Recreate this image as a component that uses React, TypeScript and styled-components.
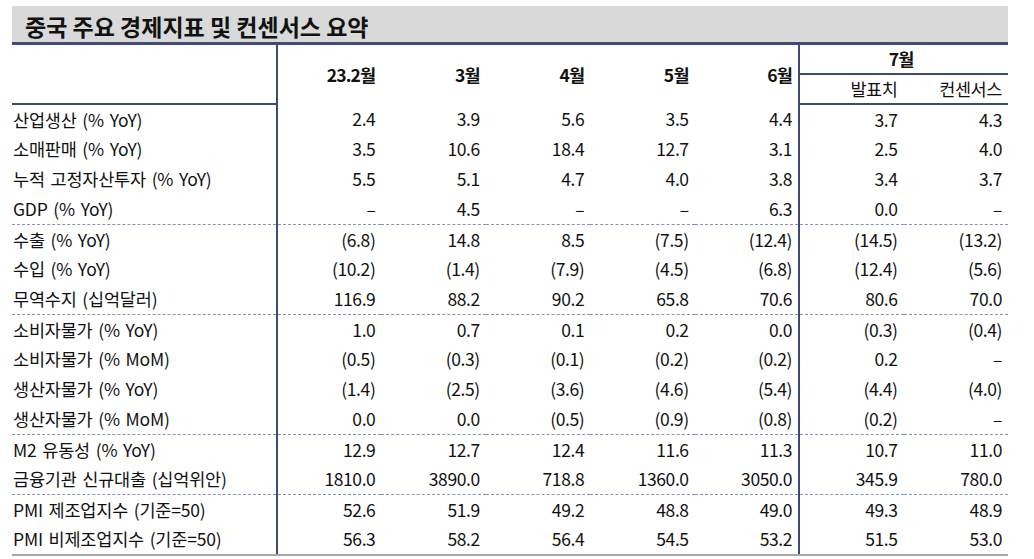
import styled, { createGlobalStyle } from "styled-components";

/*
중국 주요 경제지표 요약 테이블
구분선: 남색 실선(헤더/세로), 점선(그룹 사이), 회색 실선(하단)
*/
const GlobalStyle = createGlobalStyle`
  html, body {
    margin: 0;
    padding: 0;
    background: #ffffff;
  }
  body {
    font-family: "Noto Sans CJK KR", "Noto Sans", sans-serif;
    color: #111111;
  }
`;

const NAVY = "#3f4a78";

const Wrapper = styled.div`
  width: 996px;
  margin: 6px 0 0 12px;
`;

const TitleBar = styled.div`
  height: 39px;
  display: flex;
  align-items: center;
  padding: 3px 0 0 13px;
  box-sizing: border-box;
  background-color: #d9d9d9;
  border-bottom: 3px solid ${NAVY};
  font-size: 23px;
  font-weight: 700;
  color: #111111;
`;

const Table = styled.table`
  width: 996px;
  table-layout: fixed;
  border-collapse: collapse;
  font-size: 17.5px;
  letter-spacing: -0.4px;
`;

const Head = styled.th<{ $divider?: boolean; $center?: boolean; $bold?: boolean; $split?: boolean }>`
  height: 28px;
  padding: 0 6px 0 0;
  text-align: ${(p) => (p.$center ? "center" : "right")};
  font-weight: ${(p) => (p.$bold ? 700 : 400)};
  letter-spacing: ${(p) => (p.$bold ? "-0.8px" : "-0.4px")};
  line-height: 1;
  border-bottom: ${(p) => (p.$split ? `2px solid ${NAVY}` : "none")};
  border-right: ${(p) => (p.$divider ? `2px solid ${NAVY}` : "none")};
  vertical-align: middle;
`;

const HeadRow = styled.tr`
  &:last-child th {
    border-bottom: 2px solid ${NAVY};
  }
`;

const LabelHead = styled.th`
  border-right: 2px solid ${NAVY};
  border-bottom: 2px solid ${NAVY};
`;

const Row = styled.tr<{ $sep?: boolean }>`
  height: 30px;
  & > td {
    border-bottom: ${(p) => (p.$sep ? "1px dashed #8a93b3" : "none")};
  }
  &:last-child {
    height: 31px;
  }
  &:last-child > td {
    border-bottom: 2px solid #a6a6a6;
  }
`;

const Label = styled.td`
  padding: 0 0 0 1px;
  text-align: left;
  white-space: nowrap;
  letter-spacing: -0.2px;
  word-spacing: 2px;
  border-right: 2px solid ${NAVY};
  line-height: 1;
`;

const Cell = styled.td<{ $divider?: boolean }>`
  padding: 0 6px 0 0;
  text-align: right;
  line-height: 1;
  border-right: ${(p) => (p.$divider ? `2px solid ${NAVY}` : "none")};
`;

type DataRow = { label: string; values: string[]; sep?: boolean };

const months = ["23.2월", "3월", "4월", "5월", "6월"];

const rows: DataRow[] = [
  { label: "산업생산 (% YoY)", values: ["2.4", "3.9", "5.6", "3.5", "4.4", "3.7", "4.3"] },
  { label: "소매판매 (% YoY)", values: ["3.5", "10.6", "18.4", "12.7", "3.1", "2.5", "4.0"] },
  { label: "누적 고정자산투자 (% YoY)", values: ["5.5", "5.1", "4.7", "4.0", "3.8", "3.4", "3.7"] },
  { label: "GDP (% YoY)", values: ["–", "4.5", "–", "–", "6.3", "0.0", "–"], sep: true },
  { label: "수출 (% YoY)", values: ["(6.8)", "14.8", "8.5", "(7.5)", "(12.4)", "(14.5)", "(13.2)"] },
  { label: "수입 (% YoY)", values: ["(10.2)", "(1.4)", "(7.9)", "(4.5)", "(6.8)", "(12.4)", "(5.6)"] },
  { label: "무역수지 (십억달러)", values: ["116.9", "88.2", "90.2", "65.8", "70.6", "80.6", "70.0"], sep: true },
  { label: "소비자물가 (% YoY)", values: ["1.0", "0.7", "0.1", "0.2", "0.0", "(0.3)", "(0.4)"] },
  { label: "소비자물가 (% MoM)", values: ["(0.5)", "(0.3)", "(0.1)", "(0.2)", "(0.2)", "0.2", "–"] },
  { label: "생산자물가 (% YoY)", values: ["(1.4)", "(2.5)", "(3.6)", "(4.6)", "(5.4)", "(4.4)", "(4.0)"] },
  { label: "생산자물가 (% MoM)", values: ["0.0", "0.0", "(0.5)", "(0.9)", "(0.8)", "(0.2)", "–"], sep: true },
  { label: "M2 유동성 (% YoY)", values: ["12.9", "12.7", "12.4", "11.6", "11.3", "10.7", "11.0"] },
  { label: "금융기관 신규대출 (십억위안)", values: ["1810.0", "3890.0", "718.8", "1360.0", "3050.0", "345.9", "780.0"], sep: true },
  { label: "PMI 제조업지수 (기준=50)", values: ["52.6", "51.9", "49.2", "48.8", "49.0", "49.3", "48.9"] },
  { label: "PMI 비제조업지수 (기준=50)", values: ["56.3", "58.2", "56.4", "54.5", "53.2", "51.5", "53.0"] },
];

export default function App() {
  return (
    <>
      <GlobalStyle />
      <Wrapper>
        <TitleBar>중국 주요 경제지표 및 컨센서스 요약</TitleBar>
        <Table>
          <colgroup>
            <col style={{ width: 265 }} />
            {Array.from({ length: 7 }).map((_, i) => (
              <col key={i} />
            ))}
          </colgroup>
          <thead>
            <HeadRow>
              <LabelHead rowSpan={2} />
              {months.map((m, i) => (
                <Head key={m} rowSpan={2} $bold $divider={i === months.length - 1}>
                  {m}
                </Head>
              ))}
              <Head colSpan={2} $center $bold $split>
                7월
              </Head>
            </HeadRow>
            <HeadRow>
              <Head>발표치</Head>
              <Head>컨센서스</Head>
            </HeadRow>
          </thead>
          <tbody>
            {rows.map((r) => (
              <Row key={r.label} $sep={r.sep}>
                <Label>{r.label}</Label>
                {r.values.map((v, i) => (
                  <Cell key={i} $divider={i === 4}>
                    {v}
                  </Cell>
                ))}
              </Row>
            ))}
          </tbody>
        </Table>
      </Wrapper>
    </>
  );
}
